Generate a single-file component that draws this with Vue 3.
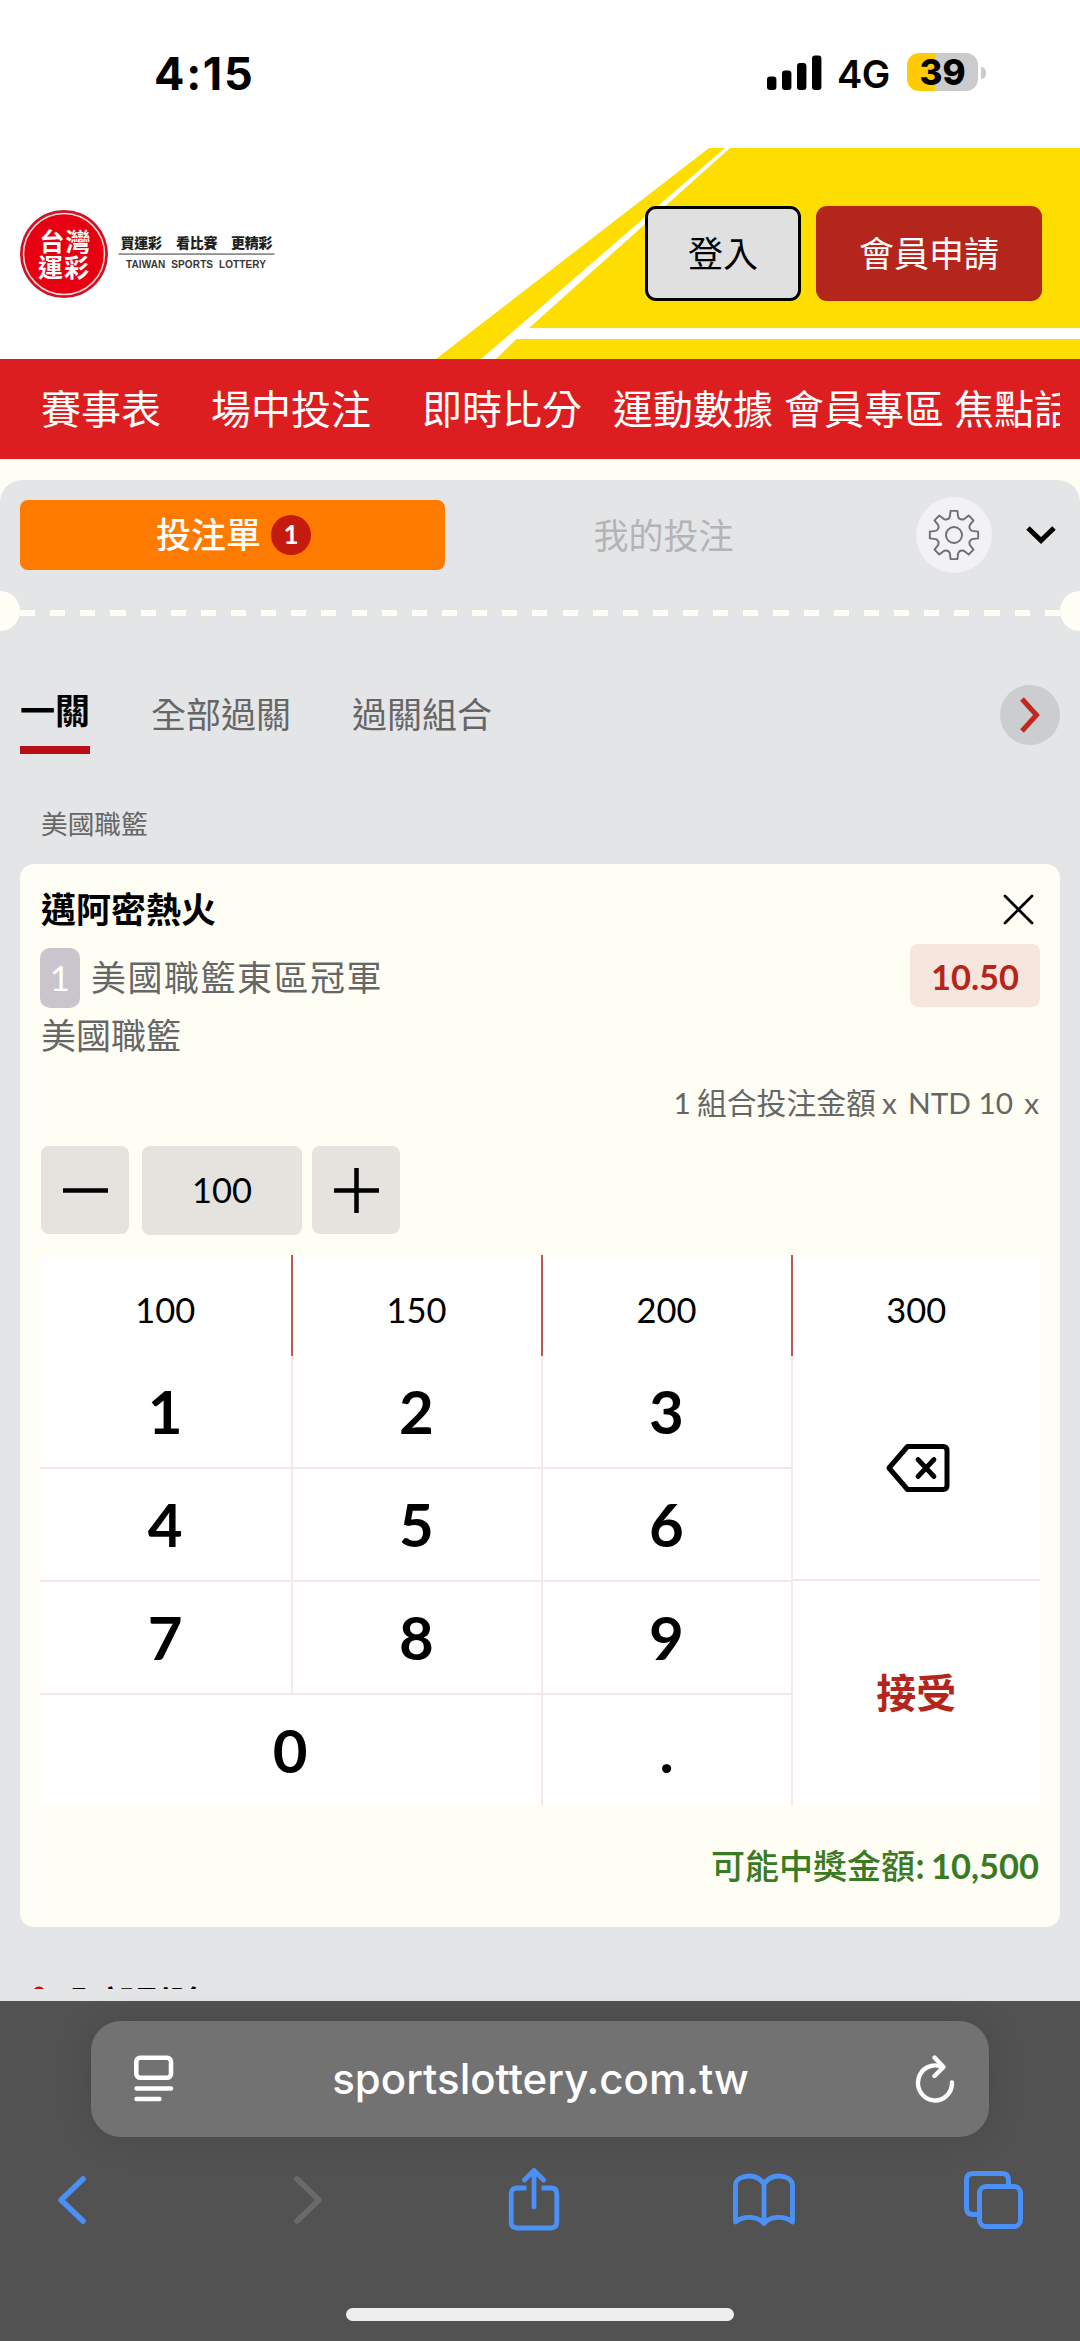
<script setup>
const navItems = [
  { label: '賽事表', gap: 0 },
  { label: '場中投注', gap: 50 },
  { label: '即時比分', gap: 51 },
  { label: '運動數據', gap: 31 },
  { label: '會員專區', gap: 11 },
  { label: '焦點話題', gap: 10 },
]
const quickAmounts = [100, 150, 200, 300]
const digits = [1, 2, 3, 4, 5, 6, 7, 8, 9]

// Outline of an eight-tooth cog centred on the origin
function cog() {
  const pt = (r, deg) => {
    const a = (deg * Math.PI) / 180
    return `${(r * Math.cos(a)).toFixed(2)} ${(r * Math.sin(a)).toFixed(2)}`
  }
  let d = ''
  for (let i = 0; i < 8; i++) {
    const a = i * 45
    d += `${i ? 'L' : 'M'}${pt(18.6, a - 13)}L${pt(24.4, a - 8)}L${pt(24.4, a + 8)}L${pt(18.6, a + 13)}Q${pt(15.6, a + 22.5)} ${pt(18.6, a + 32)}`
  }
  return d + 'Z'
}
const cogPath = cog()
</script>

<template>
  <div class="screen">
    <div class="status">
      <span class="time">4:15</span>
      <div class="status-right">
        <svg class="signal" width="55" height="36" viewBox="0 0 55 36">
          <rect x="0" y="21.5" width="9.4" height="13.5" rx="3" />
          <rect x="15" y="15.5" width="9.4" height="19.5" rx="3" />
          <rect x="30" y="8" width="9.4" height="27" rx="3" />
          <rect x="45" y="0.5" width="9.4" height="34.5" rx="3" />
        </svg>
        <span class="net">4G</span>
        <div class="battery"><span>39</span></div>
        <i class="nub"></i>
      </div>
    </div>

    <header class="header">
      <svg class="stripes" width="1080" height="211" viewBox="0 0 1080 211" fill="#fedd00">
        <path d="M709 0H725L481 211H436Z" />
        <path d="M730 0H1080V180H529Z" />
        <path d="M516.5 191H1080V211H496Z" />
      </svg>
      <svg class="logo" width="262" height="92" viewBox="18 207.5 262 92">
        <circle cx="64" cy="253.5" r="44" fill="#cf1126" />
        <circle cx="64" cy="253.5" r="40.5" fill="#e60012" stroke="#ffd9d4" stroke-width="1.5" />
        <g class="logo-mark" fill="#fff">
          <text x="39.5" y="250.5" textLength="51">台灣</text>
          <text x="38" y="276.5" textLength="51">運彩</text>
        </g>
        <g class="logo-line" fill="#231f20">
          <text x="120.500" y="247" textLength="41.5">買運彩</text>
          <text x="176" y="247" textLength="41.5">看比賽</text>
          <text x="231" y="247" textLength="41.5">更精彩</text>
        </g>
        <rect x="118.5" y="252.7" width="156" height="1.8" fill="#8f8f8f" />
        <text class="logo-en" x="126" y="267.5" textLength="140" fill="#3a3637">TAIWAN&#160; SPORTS&#160; LOTTERY</text>
      </svg>
      <div class="auth">
        <button class="login">登入</button>
        <button class="join">會員申請</button>
      </div>
    </header>

    <nav class="nav">
      <div class="nav-clip">
        <span v-for="n in navItems" :key="n.label" :style="{ marginLeft: n.gap + 'px' }">{{ n.label }}</span>
      </div>
    </nav>

    <main class="page">
      <section class="slip">
        <div class="slip-head">
          <div class="tab-on"><span>投注單</span><b class="count">1</b></div>
          <div class="tab-off">我的投注</div>
          <div class="gear">
            <svg width="54" height="54" viewBox="-27 -27 54 54" fill="none" stroke="#6f6f72" stroke-width="1.9" stroke-linejoin="round">
              <path :d="cogPath" />
              <circle r="8" />
            </svg>
          </div>
          <svg class="caret" width="30" height="20" viewBox="0 0 30 20" fill="none" stroke="#000" stroke-width="5">
            <path d="M2 3L15 15.500L28 3" />
          </svg>
        </div>
        <div class="tear"><i class="notch"></i><div class="dashes"></div><i class="notch right"></i></div>

        <div class="modes">
          <span class="mode on">一關</span>
          <span class="mode">全部過關</span>
          <span class="mode">過關組合</span>
          <div class="next">
            <svg width="24" height="38" viewBox="0 0 24 38" fill="none" stroke="#c0281f" stroke-width="5">
              <path d="M4 3L18.500 19L4 35" />
            </svg>
          </div>
        </div>

        <div class="league">美國職籃</div>

        <article class="card">
          <div class="row title-row">
            <h2>邁阿密熱火</h2>
            <svg class="close" width="31" height="31" viewBox="0 0 31 31" stroke="#000" stroke-width="2.8" stroke-linecap="round">
              <path d="M2 2L29 29M29 2L2 29" />
            </svg>
          </div>
          <div class="row event-row">
            <span class="idx">1</span>
            <span class="event">美國職籃東區冠軍</span>
            <span class="odds">10.50</span>
          </div>
          <div class="sub">美國職籃</div>
          <div class="unit"><span class="combo">1 組合投注金額 x</span><span>NTD 10</span><span class="times">x</span></div>
          <div class="stepper">
            <button class="step">
              <svg width="45" height="45" viewBox="0 0 45 45" stroke="#000" stroke-width="4.5"><path d="M0 22.500H45" /></svg>
            </button>
            <div class="amount">100</div>
            <button class="step">
              <svg width="45" height="45" viewBox="0 0 45 45" stroke="#000" stroke-width="4.5"><path d="M0 22.500H45M22.500 0V45" /></svg>
            </button>
          </div>

          <div class="pad">
            <div class="quick"><span v-for="q in quickAmounts" :key="q">{{ q }}</span></div>
            <div class="keys">
              <div class="nums">
                <span v-for="d in digits" :key="d">{{ d }}</span>
                <span class="zero">0</span>
                <span class="dot">.</span>
              </div>
              <div class="side">
                <div class="del">
                  <svg width="66" height="52" viewBox="0 0 66 52" fill="none" stroke="#000" stroke-width="5" stroke-linejoin="round" stroke-linecap="round">
                    <path d="M22.500 4.500H58Q62 4.500 62 8.500V43.500Q62 47.500 58 47.500H22.500L4 26Z" />
                    <path d="M33 17.500L49 34.500M49 17.500L33 34.500" stroke-width="4.8" />
                  </svg>
                </div>
                <div class="accept">接受</div>
              </div>
            </div>
          </div>
          <div class="win"><span>可能中獎金額: </span>10,500</div>
        </article>

        <div class="clear">
          <svg width="22" height="22" viewBox="0 0 22 22"><circle cx="11" cy="9" r="5" fill="none" stroke="#c0101a" stroke-width="3" /></svg>
          <span>全部刪除</span>
        </div>
      </section>
    </main>

    <footer class="browser">
      <div class="address">
        <svg width="42" height="50" viewBox="0 0 42 50" fill="none" stroke="#fff" stroke-width="4.6">
          <rect x="3.300" y="3.800" width="34.700" height="20" rx="4" />
          <path d="M3.500 34.500H38M3.500 45H26.500" stroke-linecap="round" stroke-width="4.4" />
        </svg>
        <span class="url">sportslottery.com.tw</span>
        <svg width="42" height="50" viewBox="0 0 42 50" fill="none" stroke="#fff" stroke-width="4.4" stroke-linecap="round" stroke-linejoin="round">
          <path d="M27.500 12.800A17 17.500 0 1 0 38 28.500" />
          <path d="M20.500 3.500L29.500 13L20.500 22" />
        </svg>
      </div>
      <div class="tools">
        <svg width="32" height="64" viewBox="0 0 32 64" fill="none" stroke="#4a90f7" stroke-width="5.6" stroke-linecap="round" stroke-linejoin="round"><path d="M26 11L4 32L26 53" /></svg>
        <svg class="fwd" width="32" height="64" viewBox="0 0 32 64" fill="none" stroke="#6a6a6a" stroke-width="5.6" stroke-linecap="round" stroke-linejoin="round"><path d="M6 11L28 32L6 53" /></svg>
        <svg class="share" width="52" height="64" viewBox="0 0 52 64" fill="none" stroke="#4a90f7" stroke-width="4.8" stroke-linecap="round" stroke-linejoin="round">
          <path d="M18.500 20H9Q3.200 20 3.200 26V54Q3.200 60 9 60H43Q48.800 60 48.800 54V26Q48.800 20 43 20H33.500" stroke-linecap="butt" />
          <path d="M26 39V3M16.500 12L26 2.500L35.500 12" />
        </svg>
        <svg class="book" width="64" height="64" viewBox="0 0 64 64" fill="none" stroke="#4a90f7" stroke-width="4.8" stroke-linecap="round" stroke-linejoin="round">
          <path d="M32 16C28 10 22.500 8 17 8C11 8 3.500 11 3.500 17V54C11 47.500 26 47.500 32 55.500C38 47.500 53 47.500 60.500 54V17C60.500 11 53 8 47 8C41.500 8 36 10 32 16V55" />
        </svg>
        <svg class="tabs" width="60" height="64" viewBox="0 0 60 64" fill="none" stroke="#4a90f7" stroke-width="5" stroke-linejoin="round">
          <path d="M14 46.500H10Q3.500 46.500 3.500 40V12Q3.500 5.500 10 5.500H39Q45.500 5.500 45.500 12V18" />
          <rect x="16.5" y="18.500" width="41" height="40" rx="6.5" />
        </svg>
      </div>
      <div class="home"></div>
    </footer>
  </div>
</template>

<style>
body { background: #fff; }
</style>

<style scoped>
* { box-sizing: border-box; }
svg { display: block; flex: none; }
button { border: 0; padding: 0; margin: 0; font: inherit; color: inherit; display: flex; align-items: center; justify-content: center; }
.screen { width: 1080px; height: 2341px; overflow: hidden; display: flex; flex-direction: column; font-family: Lato, "Noto Sans CJK TC", sans-serif; line-height: 1.2; font-size: 35px; color: #000; background: #fff; }
.status { height: 148px; flex: none; display: flex; justify-content: space-between; padding: 0 94px 0 154px; font-family: Inter, sans-serif; }
.time { font-weight: 700; font-size: 45px; line-height: 52px; padding-top: 48px; letter-spacing: 1.7px; }
.status-right { display: flex; align-items: flex-start; }
.signal { margin-top: 55px; }
.net { font-size: 38px; font-weight: 600; line-height: 46px; margin: 51px 0 0 15px; width: 70px; letter-spacing: -0.5px; }
.battery { width: 71px; height: 38px; margin-top: 53px; border-radius: 12px; background: linear-gradient(90deg, #ffcb05 0 28px, #cbcbcb 28px); display: flex; justify-content: center; align-items: center; font-weight: 800; font-size: 35px; line-height: 38px; }
.nub { width: 5px; height: 12px; margin: 67px 0 0 3px; background: #cbcbcb; border-radius: 0 6px 6px 0; }

.header { height: 211px; flex: none; position: relative; display: flex; justify-content: space-between; padding: 58px 38px 0 18px; }
.stripes { position: absolute; left: 0; top: 0; }
.logo { position: relative; margin-top: 1.5px; }
.logo-mark { font: 700 25px "Noto Sans CJK TC", sans-serif; }
.logo-line { font: 900 14px "Noto Sans CJK TC", sans-serif; }
.logo-en { font: 700 10px "Liberation Sans", sans-serif; }
.auth { position: relative; display: flex; gap: 15px; height: 95px; }
.auth button { padding-bottom: 2px; }
.login { width: 156px; height: 95px; border: 3px solid #000; border-radius: 11px; background: #e0e0e0; }
.join { width: 226px; height: 95px; border-radius: 11px; background: #b4251b; color: #fff; }

.nav { height: 100px; flex: none; background: #dd1e20; color: #fff; padding: 0 20px 0 41px; }
.nav-clip { display: flex; overflow: hidden; font-size: 40px; line-height: 101px; white-space: nowrap; }
.nav-clip span { flex: none; }

.page { height: 1542px; flex: none; background: #fffef5; padding-top: 21px; overflow: hidden; }
.slip { height: 1521px; background: #e4e5e7; border-radius: 22px 22px 0 0; }
.slip-head { height: 110px; padding: 0 23px 0 20px; display: flex; align-items: center; }
.tab-on { width: 425px; height: 70px; border-radius: 8px; background: #ff7b00; color: #fff; display: flex; align-items: center; justify-content: center; gap: 10px; padding-left: 2px; }
.tab-on span { font-weight: 500; font-family: "Noto Sans CJK TC", sans-serif; line-height: 42px; margin-top: -4px; }
.count { width: 40px; height: 40px; border-radius: 50%; background: #c41a10; font-size: 26px; line-height: 39px; text-align: center; font-weight: 700; }
.tab-off { width: 437px; text-align: center; color: #b3b4b6; }
.gear { width: 76px; height: 76px; margin-left: 34px; border-radius: 50%; background: #f2f2f4; display: flex; align-items: center; justify-content: center; }
.caret { margin-left: 34px; }
.tear { height: 41px; display: flex; align-items: center; justify-content: space-between; overflow: hidden; }
.notch { width: 20px; height: 40px; background: #fffef5; border-radius: 0 20px 20px 0; }
.notch.right { border-radius: 20px 0 0 20px; }
.dashes { flex: 1; height: 6px; margin-top: 4px; background: repeating-linear-gradient(90deg, #fffef5 0 15.1px, transparent 15.1px 30.14px); }

.modes { height: 123px; padding: 0 20px; display: flex; align-items: flex-end; color: #666; }
.mode { margin-right: 61px; height: 72px; line-height: 65px; }
.mode.on { color: #000; font-weight: 700; border-bottom: 8px solid #b90f17; line-height: 57px; }
.next { margin-left: auto; width: 60px; height: 60px; border-radius: 50%; background: #cbcdce; display: flex; align-items: center; justify-content: center; margin-bottom: 9px; }
.league { height: 110px; padding: 55px 0 0 41px; font-size: 26.7px; line-height: 30px; color: #666; }

.card { width: 1040px; height: 1063px; margin: 0 auto; background: #fffef5; border-radius: 14px; padding: 0 20px; }
.row { display: flex; align-items: center; }
.title-row { height: 80px; padding-top: 10px; justify-content: space-between; }
h2 { margin: -1px 0 0; font-size: 35px; font-weight: 700; padding-left: 1px; }
.close { margin-right: 6px; }
.event-row { height: 67px; }
.idx { width: 40px; height: 60px; margin-top: 1px; border-radius: 10px; background: #c8c6cc; color: #fff; text-align: center; line-height: 59px; }
.event { margin: -1px 0 0 11px; letter-spacing: 1.5px; color: #666; }
.odds { margin: -5px 0 0 auto; width: 130px; height: 63px; line-height: 65px; border-radius: 8px; background: #f7e6de; color: #b4251b; text-align: center; font-weight: 700; font-size: 34.5px; }
.sub { height: 60px; padding-left: 1px; line-height: 48px; color: #666; }
.unit { height: 75px; display: flex; justify-content: flex-end; gap: 11px; font-size: 29.8px; line-height: 64px; color: #666; padding-right: 1px; }
.combo { word-spacing: -1.3px; }
.stepper { display: flex; height: 89px; padding-left: 1px; }
.step { width: 88px; height: 88px; border-radius: 8px; background: #e5e3dd; }
.amount { width: 160px; height: 89px; line-height: 87px; margin: 0 10px 0 13px; border-radius: 8px; background: #e5e3dd; text-align: center; font-size: 34.5px; }

.pad { margin-top: 20px; height: 551px; background: #fff; }
.quick { display: grid; grid-template-columns: 252.5px 250px 250px 247.5px; height: 101px; font-size: 34.5px; }
.quick span { border-right: 2.5px solid #be544d; text-align: center; line-height: 109px; }
.quick span:last-child { border: 0; }
.keys { display: flex; height: 450px; }
.nums { width: 752.5px; display: grid; grid-template-columns: 252.5px 250px 250px; grid-template-rows: 113px 113px 113px 111px; font-size: 60px; font-weight: 700; }
.nums span { text-align: center; line-height: 110px; border-right: 2px solid #f6e9e9; border-bottom: 2px solid #f3e7e7; }
.nums .zero { grid-column: span 2; border-bottom: 0; }
.nums .dot { border-bottom: 0; }
.side { flex: 1; }
.del { height: 225px; border-bottom: 2px solid #f3e7e7; display: flex; align-items: center; justify-content: center; padding-left: 4px; }
.accept { height: 225px; line-height: 224px; text-align: center; font-size: 40px; font-weight: 700; color: #b4251b; }
.win { text-align: right; font-weight: 700; font-size: 34.5px; color: #3a7a24; margin-top: 38px; line-height: 42px; white-space: pre; padding-right: 1px; }
.win span { font-size: 34px; font-weight: 500; font-family: "Noto Sans CJK TC", sans-serif; word-spacing: -2px; }

.clear { height: 4px; margin-top: 58px; padding-left: 28px; display: flex; gap: 15px; overflow: hidden; font-weight: 700; align-items: flex-start; }
.clear svg { margin-top: -1px; }
.clear span { line-height: 35px; margin-top: 1px; }

.browser { height: 340px; flex: none; background: #525252; padding-top: 20px; display: flex; flex-direction: column; align-items: center; }
.address { width: 898px; height: 116px; border-radius: 30px; background: #727272; box-shadow: 0 0 36px rgba(0, 0, 0, 0.12); color: #fff; display: flex; align-items: center; justify-content: space-between; padding: 0 33px 0 42px; font: 500 42px/50px Inter, sans-serif; }
.url { margin-right: 8px; }
.tools { width: 966px; height: 64px; margin-top: 31px; display: flex; }
.fwd { margin-left: 202px; }
.share { margin-left: 185px; }
.book { margin-left: 172px; }
.tabs { margin-left: 167px; }
.home { width: 388px; height: 13px; margin-top: 76px; border-radius: 7px; background: #eee; }
</style>
